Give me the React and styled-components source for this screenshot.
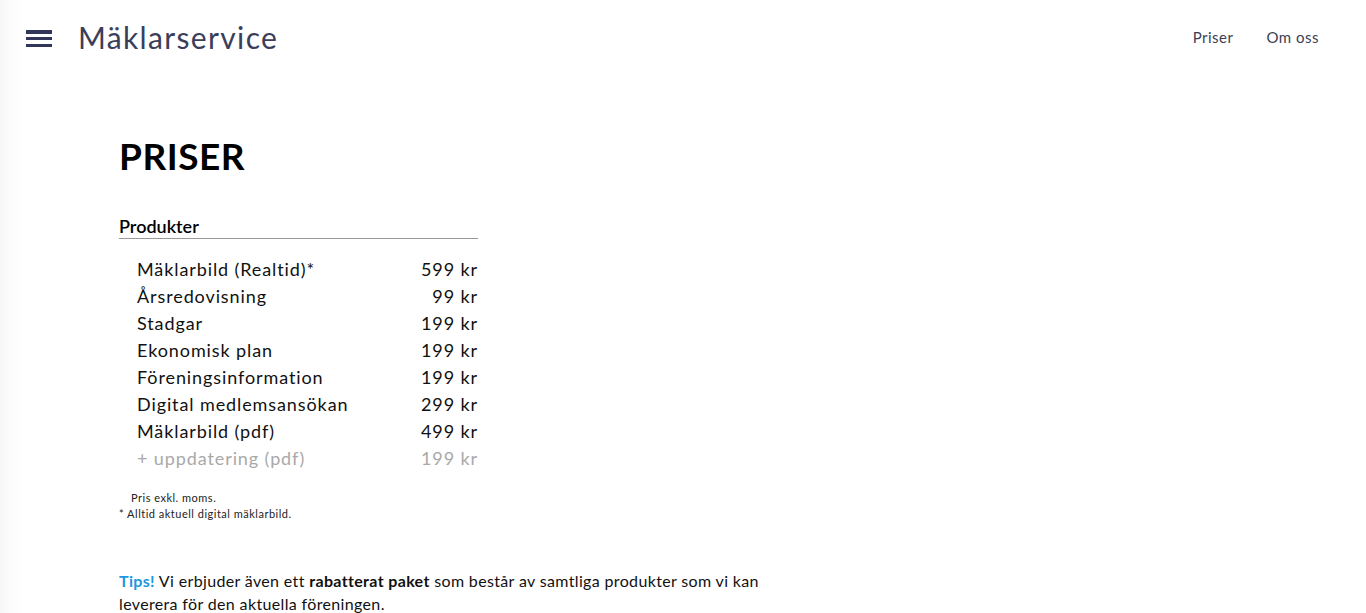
import React from "react";
import styled, { createGlobalStyle } from "styled-components";

const GlobalStyle = createGlobalStyle`
  html, body { margin: 0; padding: 0; }
  body {
    font-family: Lato, "Noto Sans", sans-serif;
    color: #111;
    background: linear-gradient(to right, #f6f6f6 0px, #fcfcfc 10px, #ffffff 22px);
  }
`;

const Header = styled.header`
  height: 77px;
  box-sizing: border-box;
  display: flex;
  align-items: center;
  justify-content: space-between;
  padding: 0 47px 3px 26px;
`;

const Brand = styled.div`
  display: flex;
  align-items: center;
  gap: 26px;
`;

const Burger = styled.button`
  width: 26px;
  height: 17px;
  padding: 0;
  margin-top: 3px;
  border: 0;
  background: none;
  display: flex;
  flex-direction: column;
  justify-content: space-between;
  cursor: pointer;
`;

const BurgerBar = styled.span`
  display: block;
  height: 3.5px;
  width: 100%;
  background: #32375a;
`;

const Logo = styled.div`
  font-size: 30px;
  letter-spacing: 1.35px;
  color: #3b3e5a;
  font-weight: 400;
`;

const Nav = styled.nav`
  display: flex;
  gap: 33px;
`;

const NavLink = styled.a`
  font-size: 15px;
  color: #3b3f55;
  text-decoration: none;
  letter-spacing: 0.5px;
`;

const Main = styled.main`
  padding: 56px 0 480px 119px;
`;

const Title = styled.h1`
  margin: 0;
  font-size: 37px;
  font-weight: 700;
  letter-spacing: 0.5px;
  color: #000;
`;

const Section = styled.section`
  width: 359px;
  margin-top: 37px;
`;

const SectionHeading = styled.h2`
  margin: 0;
  font-size: 18px;
  font-weight: 600;
  padding-bottom: 1px;
  border-bottom: 1px solid #999;
  color: #000;
`;

const PriceList = styled.ul`
  list-style: none;
  margin: 17px 0 0;
  padding: 0 0 0 18px;
`;

const PriceRow = styled.li`
  display: flex;
  justify-content: space-between;
  font-size: 18px;
  line-height: 27px;
  letter-spacing: 0.9px;
  color: ${(p) => (p.$muted ? "#a9a9a9" : "#111")};
`;

const Notes = styled.div`
  margin-top: 18px;
  font-size: 11px;
  line-height: 16px;
  letter-spacing: 0.5px;
  color: #222;
`;

const NoteLine = styled.div`
  padding-left: ${(p) => (p.$indent ? "12px" : "0")};
`;

const Tips = styled.p`
  margin: 48px 0 0;
  max-width: 680px;
  font-size: 16px;
  line-height: 22.5px;
  color: #111;
  letter-spacing: 0.35px;
`;

const TipsLabel = styled.span`
  color: #1c98e0;
  font-weight: 700;
`;

const Emph = styled.span`
  font-weight: 700;
`;

const products = [
  ["Mäklarbild (Realtid)*", "599 kr"],
  ["Årsredovisning", "99 kr"],
  ["Stadgar", "199 kr"],
  ["Ekonomisk plan", "199 kr"],
  ["Föreningsinformation", "199 kr"],
  ["Digital medlemsansökan", "299 kr"],
  ["Mäklarbild (pdf)", "499 kr"],
  ["+ uppdatering (pdf)", "199 kr", true],
];

export default function App() {
  return (
    <>
      <GlobalStyle />
      <Header>
        <Brand>
          <Burger aria-label="Meny">
            <BurgerBar />
            <BurgerBar />
            <BurgerBar />
          </Burger>
          <Logo>Mäklarservice</Logo>
        </Brand>
        <Nav>
          <NavLink href="#">Priser</NavLink>
          <NavLink href="#">Om oss</NavLink>
        </Nav>
      </Header>
      <Main>
        <Title>PRISER</Title>
        <Section>
          <SectionHeading>Produkter</SectionHeading>
          <PriceList>
            {products.map(([name, price, muted]) => (
              <PriceRow key={name} $muted={muted}>
                <span>{name}</span>
                <span>{price}</span>
              </PriceRow>
            ))}
          </PriceList>
        </Section>
        <Notes>
          <NoteLine $indent>Pris exkl. moms.</NoteLine>
          <NoteLine>* Alltid aktuell digital mäklarbild.</NoteLine>
        </Notes>
        <Tips>
          <TipsLabel>Tips!</TipsLabel> Vi erbjuder även ett{" "}
          <Emph>rabatterat paket</Emph> som består av samtliga produkter som vi
          kan leverera för den aktuella föreningen.
        </Tips>
      </Main>
    </>
  );
}
